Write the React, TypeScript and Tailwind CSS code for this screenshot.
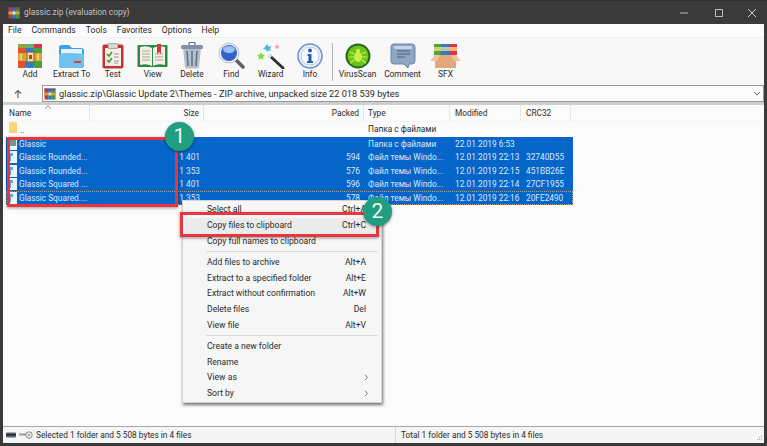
import React from "react";

function RarIcon({ s = 13 }: { s?: number }) {
  return (
    <svg width={s} height={s} viewBox="0 0 13 13" className="shrink-0">
      <rect x="0.5" y="0.5" width="4" height="12" fill="#c8392f" />
      <rect x="4.5" y="0.5" width="4" height="12" fill="#2f79c9" />
      <rect x="8.5" y="0.5" width="4" height="12" fill="#3c9a3c" />
      <rect x="0.5" y="0.5" width="12" height="2" fill="#8a3f88" opacity="0.75" />
      <rect x="0.5" y="5" width="12" height="3" fill="#d9a23d" />
      <rect x="5" y="5" width="3" height="3" fill="#f5e3b5" />
    </svg>
  );
}

function AddIcon() {
  return (
    <svg width="26" height="26" viewBox="0 0 26 26">
      <rect x="1" y="1" width="8" height="24" rx="1" fill="#e2512f" />
      <rect x="9" y="1" width="8" height="24" rx="1" fill="#2f7bd1" />
      <rect x="17" y="1" width="8" height="24" rx="1" fill="#46a23d" />
      <rect x="1" y="1" width="24" height="4" fill="#77c14d" opacity="0.75" />
      <rect x="17" y="1" width="8" height="4" fill="#d8344b" />
      <rect x="1" y="10" width="24" height="8" fill="#dca13c" />
      <rect x="10" y="9" width="7" height="10" fill="#f1d9a0" stroke="#8a5a1c" />
      <rect x="12" y="12" width="3" height="4" fill="#8a5a1c" />
      <rect x="3" y="11" width="2" height="6" fill="#f4d36b" />
      <rect x="20" y="11" width="2" height="6" fill="#f4d36b" />
    </svg>
  );
}
function ExtractIcon() {
  return (
    <svg width="27" height="26" viewBox="0 0 27 26">
      <path d="M1 5q0-3 3-3h6q2 0 3 2l1 1h9q3 0 3 3v14q0 3-3 3H4q-3 0-3-3z" fill="#3d9fe8" />
      <rect x="3" y="6" width="21" height="5" fill="#e4f2fb" />
      <path d="M1 11q8-2 25 0v11q0 3-3 3H4q-3 0-3-3z" fill="#6fc1f2" />
      <rect x="16" y="18" width="7" height="2" fill="#d9413a" />
    </svg>
  );
}
function TestIcon() {
  return (
    <svg width="22" height="26" viewBox="0 0 22 26">
      <rect x="0.5" y="1.5" width="21" height="24" rx="2" fill="#c9302f" />
      <rect x="3" y="5" width="16" height="18" fill="#f6f1e6" />
      <rect x="6" y="0.5" width="10" height="5" rx="1" fill="#d8d8d8" stroke="#777" strokeWidth="0.6" />
      <path d="M5 11l2 2 3-4" stroke="#3a9a35" strokeWidth="1.6" fill="none" />
      <path d="M5 17l2 2 3-4" stroke="#3a9a35" strokeWidth="1.6" fill="none" />
      <path d="M12 11h5M12 14h5M12 18h5M12 20h4" stroke="#9a9a9a" strokeWidth="1" />
    </svg>
  );
}
function ViewIcon() {
  return (
    <svg width="31" height="26" viewBox="0 0 31 26">
      <rect x="0.5" y="2" width="30" height="22" rx="1" fill="#2b8a46" />
      <path d="M3 4q7-2 12 1v18q-5-3-12-1z" fill="#f4f1e4" />
      <path d="M28 4q-7-2-12 1v18q5-3 12-1z" fill="#f4f1e4" />
      <path d="M5 8h8M5 11h8M5 14h8M5 17h8M18 11h8M18 14h8M18 17h8" stroke="#a8a596" strokeWidth="1" />
      <path d="M20 1h4v10l-2-2-2 2z" fill="#d7343a" />
    </svg>
  );
}
function DeleteIcon() {
  return (
    <svg width="24" height="27" viewBox="0 0 24 27">
      <rect x="9" y="0.5" width="6" height="3" rx="1" fill="none" stroke="#5e7388" strokeWidth="1.2" />
      <rect x="1" y="3" width="22" height="4" rx="1.5" fill="#7f93a5" />
      <path d="M3 7h18l-2 18q-.2 1.5-2 1.500H7q-1.800 0-2-1.500z" fill="#b4c1cb" />
      <path d="M7 9l1 15M12 9v15M17 9l-1 15" stroke="#5d6f80" strokeWidth="1.500" />
    </svg>
  );
}
function FindIcon() {
  return (
    <svg width="27" height="27" viewBox="0 0 27 27">
      <path d="M17 17l8 8" stroke="#5a6168" strokeWidth="3.500" strokeLinecap="round" />
      <circle cx="11" cy="11" r="10" fill="#e9eef3" stroke="#b9c1c9" />
      <circle cx="11" cy="11" r="8" fill="#2f62cc" />
      <ellipse cx="11" cy="7.500" rx="6" ry="3.500" fill="#9cc0f2" />
    </svg>
  );
}
function WizardIcon() {
  return (
    <svg width="28" height="26" viewBox="0 0 28 26">
      <path d="M13 13l13 12" stroke="#2e2e2e" strokeWidth="2.800" strokeLinecap="round" />
      <path d="M11 11l3 3" stroke="#e6e6e6" strokeWidth="2.800" />
      <path d="M10 1l1.500 2.500L14 3l-1 3 1.500 2-3-.5L10 9l-1-2.500L6 6l2-2z" fill="#49b6e8" />
      <path d="M20 1l.8 1.700 1.800.3-1.300 1.300.3 1.800-1.600-.9-1.600.9.3-1.800L17.400 3l1.800-.3z" fill="#f29bb1" />
      <path d="M4 9l1.200 2.500 2.800.4-2 2 .5 2.800L4 15.400l-2.500 1.300.5-2.800-2-2 2.800-.4z" fill="#77e13d" />
    </svg>
  );
}
function InfoIcon() {
  return (
    <svg width="26" height="26" viewBox="0 0 26 26">
      <circle cx="13" cy="13" r="12" fill="#e8eef8" stroke="#6c8fd0" strokeWidth="1.500" />
      <circle cx="13" cy="13" r="9" fill="#f8fafd" stroke="#bcd0ee" />
      <circle cx="13" cy="7.500" r="2" fill="#2360b5" />
      <path d="M10.500 11h4v7h1.500v2h-6v-2h1.500v-5h-1z" fill="#2360b5" />
    </svg>
  );
}
function VirusIcon() {
  return (
    <svg width="26" height="26" viewBox="0 0 26 26">
      <circle cx="13" cy="13" r="12.500" fill="#26691e" />
      <circle cx="13" cy="13" r="10.500" fill="#6fc21c" />
      <ellipse cx="13" cy="14" rx="4" ry="5" fill="#c6f14a" />
      <circle cx="13" cy="8" r="2.200" fill="#c6f14a" />
      <path d="M9 11L5 9M9 14H4M9 17l-4 3M17 11l4-2M17 14h5M17 17l4 3" stroke="#c6f14a" strokeWidth="1.200" />
    </svg>
  );
}
function CommentIcon() {
  return (
    <svg width="26" height="26" viewBox="0 0 26 26">
      <path d="M4 1h18q3 0 3 3v14q0 3-3 3h-3l-1 4-4-4H4q-3 0-3-3V4q0-3 3-3z" fill="#8ea6c6" stroke="#6d85a6" />
      <rect x="4" y="3" width="18" height="3" fill="#d3dfee" opacity="0.8" />
      <path d="M7 8h13M7 11h13M7 14h8" stroke="#4e6078" strokeWidth="1.200" />
    </svg>
  );
}
function SfxIcon() {
  return (
    <svg width="31" height="26" viewBox="0 0 31 26">
      <rect x="4" y="1" width="7" height="11" fill="#49a53c" />
      <rect x="11" y="1" width="8" height="11" fill="#2f7bd1" />
      <rect x="19" y="1" width="8" height="11" fill="#d8344b" />
      <rect x="4" y="4" width="23" height="4" fill="#f0d98c" opacity="0.8" />
      <path d="M5 12h21v13H5z" fill="#e2a877" />
      <path d="M5 12L0 18h7l3-6zM26 12l5 6h-7l-3-6z" fill="#efc29a" />
    </svg>
  );
}

const tools: [string, number, React.ReactNode][] = [
  ["Add", 42, <AddIcon />],
  ["Extract To", 41.5, <ExtractIcon />],
  ["Test", 40.5, <TestIcon />],
  ["View", 39.5, <ViewIcon />],
  ["Delete", 39, <DeleteIcon />],
  ["Find", 39.5, <FindIcon />],
  ["Wizard", 39.5, <WizardIcon />],
  ["Info", 39, <InfoIcon />],
];
const tools2: [string, number, React.ReactNode][] = [
  ["VirusScan", 46, <VirusIcon />],
  ["Comment", 44, <CommentIcon />],
  ["SFX", 42, <SfxIcon />],
];

function Tool({ label, w, icon }: { label: string; w: number; icon: React.ReactNode }) {
  return (
    <div className="flex flex-col items-center shrink-0" style={{ width: w }}>
      <div className="h-[27px] flex items-center justify-center">{icon}</div>
      <div className="text-[8.400px] leading-[11px] whitespace-nowrap">{label}</div>
    </div>
  );
}

const grid = "grid grid-cols-[84px_114px_160px_86px_71px_50px]";

function FileIcon({ dark }: { dark?: boolean }) {
  return (
    <svg width="9" height="12" viewBox="0 0 9 12" className="shrink-0">
      <rect x="0" y="0" width="9" height="12" fill="#eef4fa" />
      {dark ? (
        <rect x="0" y="0" width="8" height="8" fill="#6f9a94" />
      ) : (
        <path d="M0 2h5v3H3v5H0z" fill="#5fa3de" />
      )}
    </svg>
  );
}

const rows = [
  ["Glassic", "", "", "Папка с файлами", "22.01.2019 6:53", "", true],
  ["Glassic Rounded...", "1 401", "594", "Файл темы Windo...", "12.01.2019 22:13", "32740D55", false],
  ["Glassic Rounded...", "1 353", "576", "Файл темы Windo...", "12.01.2019 22:15", "451BB26E", false],
  ["Glassic Squared ...", "1 401", "596", "Файл темы Windo...", "12.01.2019 22:14", "27CF1955", false],
  ["Glassic Squared....", "1 353", "578", "Файл темы Windo...", "12.01.2019 22:16", "20FE2490", false],
] as const;

type MI = { t: string; k?: string; sub?: boolean; hi?: boolean } | null;
const menu: MI[] = [
  { t: "Select all", k: "Ctrl+A" },
  { t: "Copy files to clipboard", k: "Ctrl+C", hi: true },
  { t: "Copy full names to clipboard" },
  null,
  { t: "Add files to archive", k: "Alt+A" },
  { t: "Extract to a specified folder", k: "Alt+E" },
  { t: "Extract without confirmation", k: "Alt+W" },
  { t: "Delete files", k: "Del" },
  { t: "View file", k: "Alt+V" },
  null,
  { t: "Create a new folder" },
  { t: "Rename" },
  { t: "View as", sub: true },
  { t: "Sort by", sub: true },
];

function Badge({ n, cls }: { n: string; cls: string }) {
  return (
    <div
      className={
        "absolute w-[29px] h-[29px] rounded-full bg-[#1f9e80] text-[#eef7f4] flex items-center justify-center text-[21px] leading-none shadow-[0_1px_3px_rgba(0,0,0,0.45)] " +
        cls
      }
    >
      {n}
    </div>
  );
}

export default function App() {
  return (
    <div className="relative w-[767px] h-[446px] overflow-hidden bg-[#3a3a3a] text-[#2a2a2a] flex flex-col font-['Roboto','Open_Sans',sans-serif]">
      {/* title bar */}
      <div className="h-[24px] shrink-0 flex items-center pl-[8px] border-t border-[#2c2c2c]">
        <RarIcon s={12} />
        <span className="ml-[4px] text-[8.400px] text-[#c4c4c4]">glassic.zip (evaluation copy)</span>
        <div className="ml-auto flex items-center text-[#b5b5b5]">
          <svg width="10" height="10" viewBox="0 0 10 10" className="mr-[25px]">
            <path d="M1 5h8" stroke="#bbb" />
          </svg>
          <svg width="10" height="10" viewBox="0 0 10 10" className="mr-[23px]">
            <rect x="1.500" y="1.500" width="7" height="7" fill="none" stroke="#bbb" />
          </svg>
          <svg width="10" height="10" viewBox="0 0 10 10" className="mr-[10px]">
            <path d="M1 1l8 8M9 1l-8 8" stroke="#ccc" />
          </svg>
        </div>
      </div>

      <div className="mx-[3px] mb-[3px] flex-1 flex flex-col bg-[#fafafa] min-h-0">
        {/* menu */}
        <div className="h-[14px] shrink-0 flex items-center pl-[5px] gap-[10px] text-[8.600px] bg-[#fcfcfc] border-b border-[#f0f0f0]">
          {["File", "Commands", "Tools", "Favorites", "Options", "Help"].map((m) => (
            <span key={m}>{m}</span>
          ))}
        </div>
        {/* toolbar */}
        <div className="h-[47px] shrink-0 flex items-start pt-[4px] pl-[6px] bg-[#f8f8f8]">
          {tools.map(([l, w, i]) => (
            <Tool key={l} label={l} w={w} icon={i} />
          ))}
          <div className="w-[1px] h-[38px] bg-[#b4b4b4] ml-[2px] mr-[2px] mt-[1px] shrink-0" />
          {tools2.map(([l, w, i]) => (
            <Tool key={l} label={l} w={w} icon={i} />
          ))}
        </div>
        {/* address */}
        <div className="h-[17px] shrink-0 flex items-center bg-[#f8f8f8]">
          <div className="w-[39px] flex pl-[10px]">
            <svg width="10" height="10" viewBox="0 0 10 10">
              <path d="M5 9V2M2 4.500L5 1.500l3 3" stroke="#666" strokeWidth="1.200" fill="none" />
            </svg>
          </div>
          <div className="flex-1 h-[17px] border border-[#9a9a9a] flex items-center pl-[1px] bg-[#fbfbfb]">
            <RarIcon s={12} />
            <span className="ml-[3px] text-[9.200px] whitespace-nowrap">
              glassic.zip\Glassic Update 2\Themes - ZIP archive, unpacked size 22 018 539 bytes
            </span>
            <svg width="8" height="6" viewBox="0 0 8 6" className="ml-auto mr-[2px]">
              <path d="M1 1l3 3 3-3" stroke="#666" fill="none" />
            </svg>
          </div>
        </div>
        <div className="h-[3px] shrink-0 bg-[#cfcfcf]" />
        {/* list */}
        <div className="flex-1 min-h-0 bg-[#fbfbfb] text-[8.300px]">
          <div className={grid + " h-[17px] pl-[3px] items-center border-b border-[#f4f4f4] relative"}>
            <div className="pl-[3px] h-full flex items-center border-r border-[#e6e6e6]">Name</div>
            <div className="pr-[4px] h-full flex items-center justify-end border-r border-[#e6e6e6]">Size</div>
            <div className="pr-[4px] h-full flex items-center justify-end border-r border-[#e6e6e6]">Packed</div>
            <div className="pl-[4px] h-full flex items-center border-r border-[#e6e6e6]">Type</div>
            <div className="pl-[5px] h-full flex items-center border-r border-[#e6e6e6]">Modified</div>
            <div className="pl-[5px] h-full flex items-center border-r border-[#e6e6e6]">CRC32</div>
            <svg width="8" height="4" viewBox="0 0 8 4" className="absolute left-[41px] top-[0px]">
              <path d="M1 3.500L4 .8l3 2.700" stroke="#888" fill="none" />
            </svg>
          </div>
          <div className={grid + " h-[15px] pl-[3px] items-center"}>
            <div className="pl-[3px] flex items-center gap-[3px]">
              <svg width="8" height="11" viewBox="0 0 8 11" className="shrink-0 -mt-[4px]">
                <rect x="0" y="0" width="8" height="11" fill="#f5d778" />
              </svg>
              <span className="mt-[1px]">..</span>
            </div>
            <div />
            <div />
            <div className="pl-[4px] whitespace-nowrap">Папка с файлами</div>
          </div>
          {rows.map((r, i) => (
            <div
              key={i}
              className={
                grid +
                " h-[13.500px] ml-[3px] w-[567px] items-center bg-[#0565c9] text-[#dce9f8]" +
                (i === 4 ? " outline-1 outline-dotted outline-[#b8a070] -outline-offset-1" : "")
              }
            >
              <div className="pl-[2px] flex items-center gap-[2px] min-w-0 w-[170px] overflow-hidden">
                <FileIcon dark={r[6]} />
                <span className="whitespace-nowrap">{r[0]}</span>
              </div>
              <div className="pr-[4px] text-right">{r[1]}</div>
              <div className="pr-[4px] text-right">{r[2]}</div>
              <div className="pl-[4px] whitespace-nowrap">{r[3]}</div>
              <div className="pl-[5px] whitespace-nowrap">{r[4]}</div>
              <div className="pl-[5px] whitespace-nowrap">{r[5]}</div>
            </div>
          ))}
        </div>
        {/* status */}
        <div className="h-[17px] shrink-0 flex items-center border-t border-[#a8a8a8] bg-[#f5f5f5] text-[8.300px] relative">
          <div className="w-[393px] flex items-center pl-[3px] border-r border-[#d8d8d8] h-full">
            <svg width="27" height="9" viewBox="0 0 27 9" className="shrink-0">
              <rect x="0" y="1.500" width="10" height="5" rx="1" fill="#5b6268" />
              <rect x="0" y="3" width="10" height="1.500" fill="#1f2a33" />
              <path d="M13 3.500h7" stroke="#999" strokeWidth="2" />
              <circle cx="23" cy="4" r="3.200" fill="#eee" stroke="#888" />
              <circle cx="23" cy="4" r="1" fill="#888" />
            </svg>
            <span className="ml-[3px] whitespace-nowrap">Selected 1 folder and 5 508 bytes in 4 files</span>
          </div>
          <span className="ml-[5px] whitespace-nowrap">Total 1 folder and 5 508 bytes in 4 files</span>
          <svg width="8" height="8" viewBox="0 0 8 8" className="absolute right-[1px] bottom-[1px]">
            <path d="M6 1h1v1H6zM4 3h1v1H4zM6 3h1v1H6zM2 5h1v1H2zM4 5h1v1H4zM6 5h1v1H6z" fill="#aaa" />
          </svg>
        </div>
      </div>

      {/* context menu */}
      <div className="absolute left-[182px] top-[200px] w-[200px] h-[203px] bg-[#f6f6f6] border border-[#d4d4d4] shadow-[1px_2px_3px_rgba(0,0,0,0.55)] pt-[1px] px-[2px] text-[8.600px] flex flex-col">
        {menu.map((m, i) =>
          m === null ? (
            <div key={i} className="h-[5px] ml-[21px] mr-[1px] flex items-center shrink-0">
              <div className="w-full h-[1px] bg-[#dcdcdc]" />
            </div>
          ) : (
            <div
              key={i}
              className={
                "h-[15.800px] shrink-0 flex items-center pl-[22px] pr-[13px] " + (m.hi ? "bg-[#ebebeb]" : "")
              }
            >
              <span className="whitespace-nowrap">{m.t}</span>
              {m.k && <span className="ml-auto whitespace-nowrap">{m.k}</span>}
              {m.sub && (
                <svg width="5" height="7" viewBox="0 0 5 7" className="ml-auto -mr-[3px]">
                  <path d="M1 .8l2.500 2.700L1 6.200" stroke="#777" fill="none" />
                </svg>
              )}
            </div>
          )
        )}
      </div>

      {/* callouts */}
      <div className="absolute left-[7px] top-[137px] w-[171px] h-[70px] border-[3px] border-[#e8363f] shadow-[0_1px_3px_rgba(0,0,0,0.4)]" />
      <div className="absolute left-[180px] top-[212px] w-[199px] h-[25px] border-[3px] border-[#e8363f] shadow-[0_1px_3px_rgba(0,0,0,0.4)]" />
      <Badge n="1" cls="left-[165px] top-[122px]" />
      <Badge n="2" cls="left-[363px] top-[197px]" />
    </div>
  );
}
